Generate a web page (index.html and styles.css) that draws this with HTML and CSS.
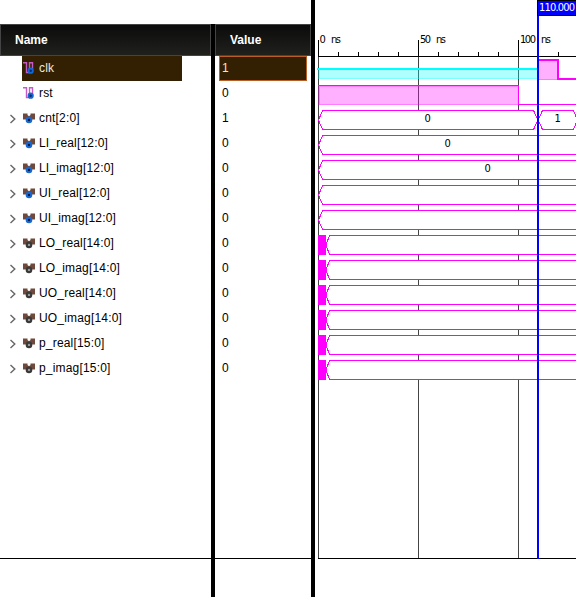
FILE: index.html
```
<!DOCTYPE html>
<html lang="en">
<head>
<meta charset="utf-8">
<title>Waveform</title>
<link rel="stylesheet" href="styles.css">
</head>
<body>
<svg class="defs" aria-hidden="true">
  <symbol id="scalar" viewBox="0 0 12 14">
    <path d="M0 1.700H3.500V11.500H6.500V1.700H9.500V8" fill="none" stroke="#c45cc4" stroke-width="1.4"/>
    <circle cx="7.700" cy="9.700" r="3.100" fill="#1767d2"/><circle cx="7.700" cy="9.700" r="1.200" fill="#082c69"/>
  </symbol>
  <symbol id="bus" viewBox="0 0 12 14">
    <path d="M0 2.500H4.500V4L6 5.200L7.500 4V2.500H12V8.500H0Z" fill="#6f4a3c"/>
    <circle cx="6" cy="8.900" r="3.300" fill="currentColor"/><circle cx="6" cy="8.900" r="1.200" class="hub"/>
  </symbol>
  <symbol id="chevron" viewBox="0 0 7 10"><path d="M1.500 1L5.800 5L1.500 9" fill="none" stroke="#666" stroke-width="1.4"/></symbol>
</svg>
<main class="viewer">
  <section class="panel names">
    <h2 class="head">Name</h2>
    <ul class="rows">
      <li class="row selected"><span class="toggle"></span><svg class="icon"><use href="#scalar"/></svg>clk</li>
      <li class="row"><span class="toggle"></span><svg class="icon"><use href="#scalar"/></svg>rst</li>
      <li class="row"><svg class="toggle"><use href="#chevron"/></svg><svg class="icon in"><use href="#bus"/></svg>cnt[2:0]</li>
      <li class="row"><svg class="toggle"><use href="#chevron"/></svg><svg class="icon in"><use href="#bus"/></svg>LI_real[12:0]</li>
      <li class="row"><svg class="toggle"><use href="#chevron"/></svg><svg class="icon in"><use href="#bus"/></svg>LI_imag[12:0]</li>
      <li class="row"><svg class="toggle"><use href="#chevron"/></svg><svg class="icon in"><use href="#bus"/></svg>UI_real[12:0]</li>
      <li class="row"><svg class="toggle"><use href="#chevron"/></svg><svg class="icon in"><use href="#bus"/></svg>UI_imag[12:0]</li>
      <li class="row"><svg class="toggle"><use href="#chevron"/></svg><svg class="icon out"><use href="#bus"/></svg>LO_real[14:0]</li>
      <li class="row"><svg class="toggle"><use href="#chevron"/></svg><svg class="icon out"><use href="#bus"/></svg>LO_imag[14:0]</li>
      <li class="row"><svg class="toggle"><use href="#chevron"/></svg><svg class="icon out"><use href="#bus"/></svg>UO_real[14:0]</li>
      <li class="row"><svg class="toggle"><use href="#chevron"/></svg><svg class="icon out"><use href="#bus"/></svg>UO_imag[14:0]</li>
      <li class="row"><svg class="toggle"><use href="#chevron"/></svg><svg class="icon out"><use href="#bus"/></svg>p_real[15:0]</li>
      <li class="row"><svg class="toggle"><use href="#chevron"/></svg><svg class="icon out"><use href="#bus"/></svg>p_imag[15:0]</li>
    </ul>
  </section>
  <div class="divider short"></div>
  <section class="panel values">
    <h2 class="head">Value</h2>
    <ul class="rows">
      <li class="row selected">1</li><li class="row">0</li><li class="row">1</li><li class="row">0</li><li class="row">0</li><li class="row">0</li><li class="row">0</li><li class="row">0</li><li class="row">0</li><li class="row">0</li><li class="row">0</li><li class="row">0</li><li class="row">0</li>
    </ul>
  </section>
  <div class="divider"></div>
  <svg class="wave" viewBox="315 0 261 597" width="261" height="597" shape-rendering="crispEdges">
    <defs>
      <path id="wide" d="M577 .5H322.500L318.500 10L322.500 19.500H577"/>
      <g id="late"><path class="trace" d="M577 .5H329.500L326 10L329.500 19.500H577"/><rect x="318" y="0" width="8" height="20" fill="#f0f"/></g>
    </defs>
    <path class="grid" d="M318.500 57V558M418.500 57V558M518.500 57V558"/>
    <path class="ruler" d="M318 56.500H576M318.500 40V57M418.500 40V57M518.500 40V57M338.500 52V57M358.500 52V57M378.500 52V57M398.500 52V57M438.500 52V57M458.500 52V57M478.500 52V57M498.500 52V57M538.500 52V57M558.500 52V57"/>
    <g class="tick">
      <text x="319.500" y="43">0</text><text x="331" y="43" textLength="10">ns</text>
      <text x="420" y="43" textLength="11">50</text><text x="436" y="43" textLength="10">ns</text>
      <text x="520" y="43" textLength="16">100</text><text x="541" y="43" textLength="10">ns</text>
    </g>

    <rect x="318" y="70" width="220" height="9" fill="#0ff" fill-opacity=".31"/>
    <path d="M538 78.500H319.500V70" class="edge cyan"/>
    <rect x="317" y="68" width="221" height="2" fill="#0ff"/>
    <rect x="538" y="61" width="20" height="19" fill="#f0f" fill-opacity=".31"/>
    <path d="M538 79.500H558" class="edge"/>
    <path d="M538 60H558V79H577" fill="none" stroke="#f0f" stroke-width="2"/>

    <rect x="318" y="86" width="200" height="19" fill="#f0f" fill-opacity=".31"/>
    <path d="M518 86.500H319.500V104.500H518" class="edge"/>
    <path class="line" d="M318 85.500H518.500V104.500H577"/>

    <g class="trace">
      <path d="M533.500 110.500H322.500L318.500 120L322.500 129.500H533.500L538 120Z"/>
      <path d="M573.500 110.500H542.500L538 120L542.500 129.500H573.500L577.500 120Z"/>
      <use href="#wide" y="135"/><use href="#wide" y="160"/><use href="#wide" y="185"/><use href="#wide" y="210"/>
    </g>
    <use href="#late" y="235"/><use href="#late" y="260"/><use href="#late" y="285"/><use href="#late" y="310"/><use href="#late" y="335"/><use href="#late" y="360"/>
    <g class="data"><text x="424.500" y="122">0</text><text x="554.500" y="122">1</text><text x="444.500" y="147">0</text><text x="484.500" y="172">0</text></g>
    <rect x="318" y="558" width="258" height="1"/>
    <rect x="537" y="0" width="2" height="559" fill="#00f"/>
    <rect x="537" y="0" width="40" height="16"/><rect x="538" y="1" width="39" height="14" fill="#00f"/>
    <text class="cursor" x="539" y="11" textLength="36">110.000</text>
  </svg>
</main>
</body>
</html>
```
FILE: styles.css
```
* { box-sizing: border-box; }
body { margin: 0; background: #fff; color: #000; font: 12px "Liberation Sans", Arial, sans-serif; }
.defs { display: block; width: 0; height: 0; }
.viewer { display: grid; grid-template-columns: 211px 4px 96px 4px 261px; height: 597px; overflow: hidden; }
.panel { height: 559px; padding-top: 24px; border-bottom: 1px solid #000; }
.head { margin: 0; height: 32px; padding-left: 14px; border: 1px solid #444; background: linear-gradient(#0b0b0b, #20201d); color: #fff; font-size: 12px; line-height: 30px; }
.rows { margin: 0; padding: 0; list-style: none; }
.row { display: flex; align-items: center; height: 25px; padding-bottom: 2px; white-space: pre; }
.names .row { padding-left: 9px; letter-spacing: .18px; }
.names .selected { width: 182px; color: #ede9df; background: linear-gradient(#332002, #332002) 22px 0 no-repeat; }
.toggle { width: 7px; height: 10px; margin-right: 7px; position: relative; top: 1px; }
.icon { width: 12px; height: 14px; margin-right: 4px; }
.in { color: #1767d2; }
.out { color: #393939; }
.hub { fill: #0a1b38; }
.out .hub { fill: #999; }
.out { --hub: #999; }
.hub { fill: var(--hub, #0a1b38); }
.values .row { margin: 0 4px; padding-left: 3px; }
.values .selected { border: 1px solid #b95f25; background: #332002; color: #ede9c0; padding-left: 2px; }
.divider { background: #000; }
.short { margin-top: 24px; }
.wave { display: block; }
.grid { stroke: #444; fill: none; }
.ruler { stroke: #000; fill: none; }
.edge { stroke: #f0f; stroke-opacity: .3; fill: none; }
.cyan { stroke: #0ff; }
.line { stroke: #f0f; fill: none; }
.trace { stroke: #f0f; fill: #fff; }
.tick, .data, .cursor { font: 11px "DejaVu Sans Condensed", "DejaVu Sans", sans-serif; }
.cursor { fill: #fff; }
```
